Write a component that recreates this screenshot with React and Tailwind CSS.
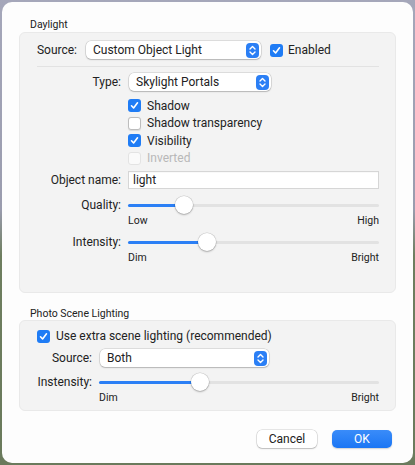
import React from 'react';

const font = { fontFamily: 'Roboto, "Liberation Sans", sans-serif' };

function Stepper() {
  return (
    <div className="flex h-[15px] w-[13px] shrink-0 items-center justify-center rounded-[4px] bg-[#2b7ff5]">
      <svg width="7" height="11" viewBox="0 0 7 11" fill="none">
        <path d="M1 4 L3.5 1.5 L6 4" stroke="white" strokeWidth="1.4" strokeLinecap="round" strokeLinejoin="round" />
        <path d="M1 7 L3.5 9.5 L6 7" stroke="white" strokeWidth="1.4" strokeLinecap="round" strokeLinejoin="round" />
      </svg>
    </div>
  );
}

function Popup({ label, width }) {
  return (
    <div
      className="flex h-[18px] shrink-0 items-center justify-between rounded-[5px] bg-white pl-[7px] pr-[2px] text-[12px] text-[#222] shadow-[0_0_0_0.5px_rgba(0,0,0,0.18),0_1px_1.5px_rgba(0,0,0,0.18)]"
      style={{ width }}
    >
      <span className="leading-none">{label}</span>
      <Stepper />
    </div>
  );
}

function Checkbox({ checked, disabled }) {
  if (checked) {
    return (
      <div className="flex h-[13px] w-[13px] shrink-0 items-center justify-center rounded-[3px] bg-[#1f7cf5]">
        <svg width="9" height="9" viewBox="0 0 9 9" fill="none">
          <path d="M1.5 4.8 L3.6 7 L7.5 1.8" stroke="white" strokeWidth="1.6" strokeLinecap="round" strokeLinejoin="round" />
        </svg>
      </div>
    );
  }
  return (
    <div
      className={
        disabled
          ? 'h-[13px] w-[13px] shrink-0 rounded-[3px] border border-[#e3e3e3] bg-[#fafafa]'
          : 'h-[13px] w-[13px] shrink-0 rounded-[3px] border border-[#bdbdbd] bg-white shadow-[0_0.5px_1px_rgba(0,0,0,0.1)]'
      }
    />
  );
}

function Slider({ width, value }) {
  return (
    <div className="relative h-[18px] shrink-0" style={{ width }}>
      <div className="absolute left-0 right-0 top-[8px] h-[3px] rounded-full bg-[#e2e2e2]" />
      <div className="absolute left-0 top-[8px] h-[3px] rounded-full bg-[#2b7ff5]" style={{ width: value }} />
      <div
        className="absolute top-0 h-[18px] w-[18px] rounded-full bg-white shadow-[0_0_0_0.5px_rgba(0,0,0,0.15),0_1px_2px_rgba(0,0,0,0.25)]"
        style={{ left: value - 9 }}
      />
    </div>
  );
}

function CheckRow({ label, checked, disabled }) {
  return (
    <div className="flex h-[17.5px] items-center gap-[6px] pl-[108px]">
      <Checkbox checked={checked} disabled={disabled} />
      <span className={disabled ? 'text-[12px] text-[#b8b8b8]' : 'text-[12px] text-[#222]'}>{label}</span>
    </div>
  );
}

export default function App() {
  return (
    <div className="h-[465px] w-[415px] bg-[linear-gradient(180deg,#a5a7ba_0%,#9a9cae_45%,#6e7e5f_55%,#6a7a5c_100%)] p-[2px]" style={font}>
      <div className="flex h-[461px] flex-col rounded-[10px] bg-[#fdfdfd] px-[17px] text-[#222]">
        <div className="mt-[16px] h-[13px] pl-[11px] text-[10.5px] leading-[13px]">Daylight</div>

        <div className="mt-[1px] flex flex-col rounded-[6px] border border-[#e9e9e9] bg-[#f3f3f3] pb-[28px]">
          <div className="mt-[8px] flex h-[18px] items-center">
            <div className="w-[57px] text-right text-[12px]">Source:</div>
            <div className="ml-[9px]">
              <Popup label="Custom Object Light" width={175} />
            </div>
            <div className="ml-[9px] flex items-center gap-[5px]">
              <Checkbox checked />
              <span className="text-[12px]">Enabled</span>
            </div>
          </div>

          <div className="ml-[17px] mr-[16px] mt-[7px] h-px bg-[#e2e2e2]" />

          <div className="mt-[6px] flex h-[18px] items-center">
            <div className="w-[101px] text-right text-[12px]">Type:</div>
            <div className="ml-[8px]">
              <Popup label="Skylight Portals" width={142} />
            </div>
          </div>

          <div className="mt-[6px]">
            <CheckRow label="Shadow" checked />
            <CheckRow label="Shadow transparency" />
            <CheckRow label="Visibility" checked />
            <CheckRow label="Inverted" disabled />
          </div>

          <div className="mt-[4px] flex h-[18px] items-center">
            <div className="w-[101px] text-right text-[12px]">Object name:</div>
            <div className="ml-[7px] flex h-[18px] w-[251px] items-center border border-[#d6d6d6] bg-white pl-[4px] text-[12px] shadow-[inset_0_0.5px_0_rgba(0,0,0,0.05)]">
              light
            </div>
          </div>

          <div className="mt-[7px] flex h-[18px] items-center">
            <div className="w-[101px] text-right text-[12px]">Quality:</div>
            <div className="ml-[7px]">
              <Slider width={251} value={56} />
            </div>
          </div>
          <div className="ml-[108px] flex h-[13px] w-[251px] items-center justify-between text-[10.5px] leading-[13px]">
            <span>Low</span>
            <span>High</span>
          </div>

          <div className="mt-[6px] flex h-[18px] items-center">
            <div className="w-[101px] text-right text-[12px]">Intensity:</div>
            <div className="ml-[7px]">
              <Slider width={251} value={79} />
            </div>
          </div>
          <div className="ml-[108px] flex h-[13px] w-[251px] items-center justify-between text-[10.5px] leading-[13px]">
            <span>Dim</span>
            <span>Bright</span>
          </div>
        </div>

        <div className="mt-[14px] h-[13px] pl-[11px] text-[10.5px] leading-[13px]">Photo Scene Lighting</div>

        <div className="flex flex-col rounded-[6px] border border-[#e9e9e9] bg-[#f3f3f3] pb-[6px]">
          <div className="mt-[6px] flex h-[18px] items-center gap-[6px] pl-[17px]">
            <Checkbox checked />
            <span className="text-[12px]">Use extra scene lighting (recommended)</span>
          </div>

          <div className="mt-[4px] flex h-[18px] items-center">
            <div className="w-[72px] text-right text-[12px]">Source:</div>
            <div className="ml-[8px]">
              <Popup label="Both" width={169} />
            </div>
          </div>

          <div className="mt-[6px] flex h-[18px] items-center">
            <div className="w-[72px] text-right text-[12px]">Instensity:</div>
            <div className="ml-[7px]">
              <Slider width={280} value={101} />
            </div>
          </div>
          <div className="ml-[79px] flex h-[13px] w-[280px] items-center justify-between text-[10.5px] leading-[13px]">
            <span>Dim</span>
            <span>Bright</span>
          </div>
        </div>

        <div className="mr-[4px] mt-[19px] flex justify-end gap-[15px]">
          <button
            type="button"
            className="flex h-[18px] w-[60px] items-center justify-center rounded-[5px] bg-white text-[12px] text-[#222] shadow-[0_0_0_0.5px_rgba(0,0,0,0.18),0_1px_1.5px_rgba(0,0,0,0.18)]"
          >
            Cancel
          </button>
          <button
            type="button"
            className="flex h-[18px] w-[60px] items-center justify-center rounded-[5px] bg-[linear-gradient(180deg,#3a8cf9,#1b76f4)] text-[12px] text-white shadow-[0_1px_1.5px_rgba(0,0,0,0.18)]"
          >
            OK
          </button>
        </div>
      </div>
    </div>
  );
}
